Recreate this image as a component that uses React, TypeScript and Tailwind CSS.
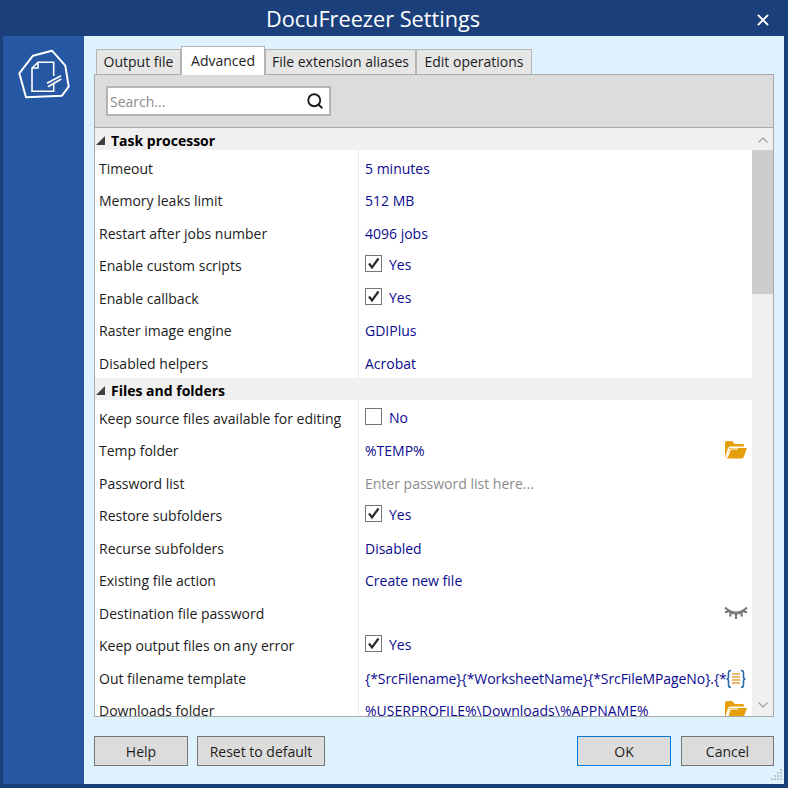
import React from 'react';
import { Search, ChevronUp, ChevronDown, X } from 'lucide-react';

type Row = {
  label: string;
  value?: string;
  check?: boolean;
  placeholder?: boolean;
  icon?: 'folder' | 'eye' | 'template';
};

const TABS = [
  { label: 'Output file', width: 'w-[85px]' },
  { label: 'Advanced', width: 'w-[84px]' },
  { label: 'File extension aliases', width: 'w-[151px]' },
  { label: 'Edit operations', width: 'w-[116px]' },
];

const TASK_ROWS: Row[] = [
  { label: 'Timeout', value: '5 minutes' },
  { label: 'Memory leaks limit', value: '512 MB' },
  { label: 'Restart after jobs number', value: '4096 jobs' },
  { label: 'Enable custom scripts', value: 'Yes', check: true },
  { label: 'Enable callback', value: 'Yes', check: true },
  { label: 'Raster image engine', value: 'GDIPlus' },
  { label: 'Disabled helpers', value: 'Acrobat' },
];

const FILE_ROWS: Row[] = [
  { label: 'Keep source files available for editing', value: 'No', check: false },
  { label: 'Temp folder', value: '%TEMP%', icon: 'folder' },
  { label: 'Password list', value: 'Enter password list here...', placeholder: true },
  { label: 'Restore subfolders', value: 'Yes', check: true },
  { label: 'Recurse subfolders', value: 'Disabled' },
  { label: 'Existing file action', value: 'Create new file' },
  { label: 'Destination file password', icon: 'eye' },
  { label: 'Keep output files on any error', value: 'Yes', check: true },
  { label: 'Out filename template', value: '{*SrcFilename}{*WorksheetName}{*SrcFileMPageNo}.{*', icon: 'template' },
  { label: 'Downloads folder', value: '%USERPROFILE%\\Downloads\\%APPNAME%', icon: 'folder' },
];

const Logo = () => (
  <svg width="56" height="56" viewBox="0 0 56 56" fill="none" stroke="white" strokeWidth="1.6">
    <path d="M3.3 26.3 L17 8.7 L36 3.7 L49.3 18.7 L52.7 39.7 L46 48.7 L10 50.3 Z" strokeWidth="2" strokeLinejoin="round" />
    <path d="M37.7 29 V15.3 H22 L16 21 V44.3 H37.7 V37" />
    <path d="M22 15.3 V21 H16" />
    <path d="M31 36.3 L45 28.7 M32 39.7 L45.3 32" strokeWidth="1.8" />
  </svg>
);

const FolderIcon = () => (
  <svg width="24" height="20" viewBox="0 0 24 20">
    <path d="M1 18 V3 Q1 1 3 1 H8 L11 4 H19 Q20 4 20 5.5 V6.5 H6 Q4.5 6.5 4 8 L1 18 Z" fill="#e59f0a" />
    <path d="M5.5 8 H23 L19.5 17.5 Q19 18.5 18 18.5 H3 Z" fill="#e59f0a" />
    <path d="M3.5 17 L6 10 Q6.4 9 7.5 9 H14" fill="none" stroke="#fff" strokeWidth="1.2" />
  </svg>
);

const EyeIcon = () => (
  <svg width="24" height="14" viewBox="0 0 24 14" fill="none" stroke="#7b7b7b" strokeWidth="2.8">
    <path d="M3 4 Q12 10 21 4" />
    <path d="M1 1.5 L5 5 M1 6.5 L5 5 M7 6 L6 10.5 M12 8 V13 M17 6 L18 10.5 M23 1.5 L19 5 M23 6.5 L19 5" strokeWidth="2.2" />
  </svg>
);

const TemplateIcon = () => (
  <svg width="22" height="20" viewBox="0 0 22 20" fill="none">
    <path d="M6 1.5 Q3.5 1.5 3.5 4 V8 Q3.5 10 1.5 10 Q3.5 10 3.5 12 V16 Q3.5 18.5 6 18.5" stroke="#2a6aa8" strokeWidth="1.6" />
    <path d="M16 1.5 Q18.5 1.5 18.5 4 V8 Q18.5 10 20.5 10 Q18.5 10 18.5 12 V16 Q18.5 18.5 16 18.5" stroke="#2a6aa8" strokeWidth="1.6" />
    <path d="M7 5 H15 M7 8 H15 M7 11 H15 M7 14 H15" stroke="#e8a33d" strokeWidth="1.7" />
  </svg>
);

const Checkbox = ({ checked }: { checked: boolean }) => (
  <span className="w-[17px] h-[17px] border border-[#767676] bg-white flex items-center justify-center shrink-0">
    {checked && (
      <svg width="13" height="13" viewBox="0 0 13 13" fill="none" stroke="#2b2b2b" strokeWidth="2.2">
        <path d="M2 6.5 L5 10.5 L11.5 1.5" />
      </svg>
    )}
  </span>
);

const ICONS = { folder: FolderIcon, eye: EyeIcon, template: TemplateIcon };

const SectionHeader = ({ title }: { title: string }) => (
  <div className="h-[22px] bg-[#f0f0f0] flex items-center text-[14px] font-bold text-black">
    <span className="w-0 h-0 ml-px border-l-[9px] border-l-transparent border-b-[9px] border-b-[#404040] mt-[2px]" />
    <span className="ml-[6px] pt-[2px]">{title}</span>
  </div>
);

const PropertyRow = ({ row }: { row: Row }) => {
  const Icon = row.icon ? ICONS[row.icon] : null;
  return (
    <div className="h-[32.5px] flex items-center bg-white pl-[4px] text-[14px]">
      <div className="w-[259px] shrink-0 h-full flex items-center pt-[4px] text-[#1c1c1c] whitespace-nowrap">{row.label}</div>
      <div className="h-full w-px bg-[#ececec] shrink-0" />
      <div className="flex-1 min-w-0 h-full flex items-center pl-[6px] pr-[4px] gap-[7px]">
        {row.check !== undefined && <Checkbox checked={row.check} />}
        <span
          className={`flex-1 min-w-0 pt-[4px] whitespace-nowrap ${row.placeholder ? 'text-[#8c8c8c]' : 'text-[#0b0b8f]'} ${row.check !== undefined ? '-mt-[2px]' : ''} ${row.icon === 'template' ? 'tracking-[-0.08px]' : ''}`}
        >
          {row.value}
        </span>
        {Icon && (
          <span className={`block shrink-0 ${row.icon === 'template' ? 'mt-[5px] -ml-[1px] mr-[1px]' : 'mt-[3px]'}`}>
            <Icon />
          </span>
        )}
      </div>
    </div>
  );
};

const Button = ({ label, className }: { label: string; className: string }) => (
  <button className={`h-[30px] bg-[#dcdcdc] border text-[14px] text-[#1c1c1c] ${className}`}>{label}</button>
);

export default function App() {
  return (
    <div className="w-[788px] h-[788px] bg-[#1b3f7b] p-[3px] flex flex-col overflow-hidden font-['Open_Sans','Noto_Sans',sans-serif]">
      <div className="h-[33px] shrink-0 flex items-center justify-center relative pr-[42px] text-white text-[21.7px]">
        DocuFreezer Settings
        <X className="absolute right-[13px] top-[8px] text-white" size={18} strokeWidth={2.5} />
      </div>
      <div className="flex-1 min-h-0 flex mr-[1px] mb-[1px]">
        <div className="w-[81px] shrink-0 bg-[#2557a2] pl-[13px] pt-[11px]">
          <Logo />
        </div>
        <div className="flex-1 min-w-0 bg-[#dff3fe] flex flex-col pt-[11px] pl-[10px] pr-[10px] relative">
          <div className="h-[28px] flex items-end pl-[2px] shrink-0 relative z-10 -mb-px">
            {TABS.map((tab, i) => (
              <div
                key={tab.label}
                className={
                  i === 1
                    ? `${tab.width} h-[29px] pb-[2px] bg-white border border-b-0 border-[#b4b4b4] text-[14px] text-[#1c1c1c] flex items-center justify-center`
                    : `${tab.width} h-[25px] mb-px pb-[2px] bg-[#e6e6e6] border border-b-0 border-[#b4b4b4] text-[14px] text-[#1c1c1c] flex items-center justify-center`
                }
              >
                {tab.label}
              </div>
            ))}
          </div>
          <div className="h-[643px] shrink-0 border border-[#a9a9a9] flex flex-col overflow-hidden bg-white">
            <div className="h-[53px] shrink-0 bg-[#dcdcdc] border-b border-[#a9a9a9] flex items-center pl-[11px]">
              <div className="w-[225px] h-[30px] bg-white border-2 border-[#b4b4b4] flex items-center justify-between pl-[2px] pr-[5px] text-[14px] text-[#8c8c8c]">
                <span>Search...</span>
                <Search size={18} strokeWidth={2.5} className="text-[#1c1c1c]" />
              </div>
            </div>
            <div className="flex-1 min-h-0 relative overflow-hidden bg-white">
              <SectionHeader title="Task processor" />
              <div className="mr-[21px] pb-[0.5px]">
                {TASK_ROWS.map((r) => (
                  <PropertyRow key={r.label} row={r} />
                ))}
              </div>
              <SectionHeader title="Files and folders" />
              <div className="mr-[21px]">
                {FILE_ROWS.map((r) => (
                  <PropertyRow key={r.label} row={r} />
                ))}
              </div>
              <div className="absolute right-0 top-0 bottom-0 w-[21px] bg-[#f0f0f0] flex flex-col items-center">
                <ChevronUp size={16} className="text-[#a6a6a6] mt-[4px] mb-px shrink-0" strokeWidth={2} />
                <div className="w-full h-[144px] bg-[#cdcdcd] mt-[1px] shrink-0" />
                <div className="flex-1" />
                <ChevronDown size={16} className="text-[#a6a6a6] mb-[3px] shrink-0" strokeWidth={2} />
              </div>
            </div>
          </div>
          <div className="flex justify-between mt-[19px]">
            <div className="flex gap-[9px]">
              <Button label="Help" className="w-[94px] border-[#767676]" />
              <Button label="Reset to default" className="w-[128px] border-[#767676]" />
            </div>
            <div className="flex gap-[10px]">
              <Button label="OK" className="w-[94px] border-[#0078d7]" />
              <Button label="Cancel" className="w-[93px] border-[#767676]" />
            </div>
          </div>
          <svg className="absolute right-[1px] bottom-[1px]" width="14" height="14" viewBox="0 0 14 14" fill="#b9c6cf">
            <rect x="11" y="0" width="2" height="2" />
            <rect x="8" y="3" width="2" height="2" />
            <rect x="11" y="3" width="2" height="2" />
            <rect x="5" y="6" width="2" height="2" />
            <rect x="8" y="6" width="2" height="2" />
            <rect x="11" y="6" width="2" height="2" />
            <rect x="2" y="9" width="2" height="2" />
            <rect x="5" y="9" width="2" height="2" />
            <rect x="8" y="9" width="2" height="2" />
            <rect x="11" y="9" width="2" height="2" />
          </svg>
        </div>
      </div>
    </div>
  );
}
